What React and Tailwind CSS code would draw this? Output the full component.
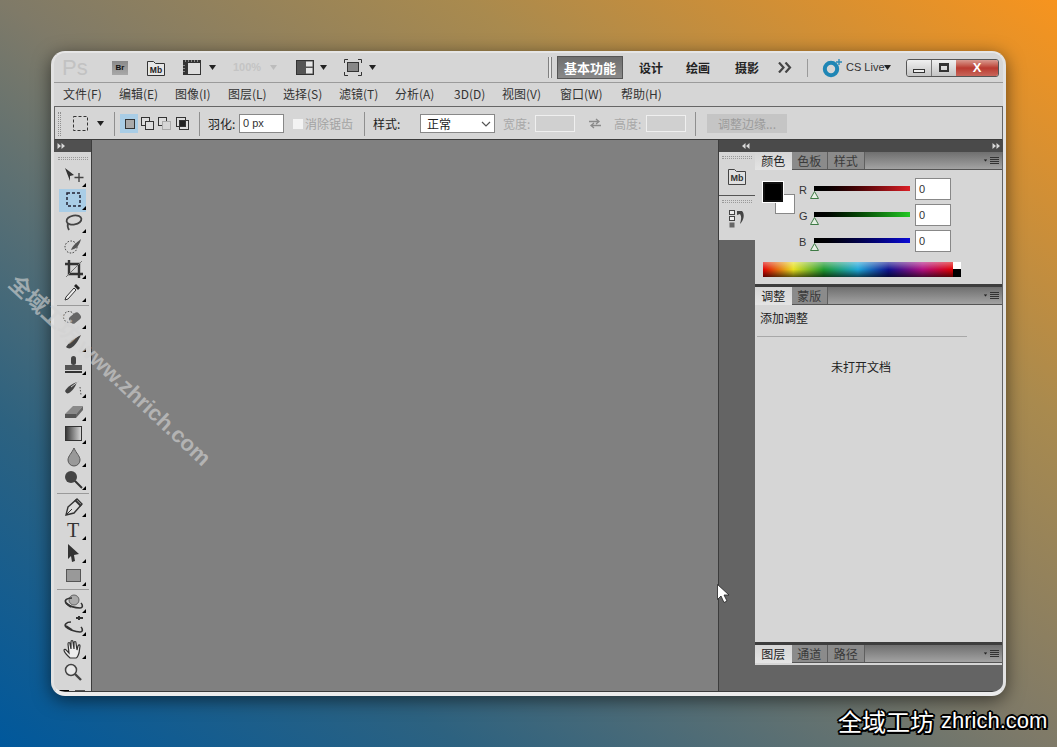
const cjk = { fontFamily: '"Noto Sans CJK SC","Liberation Sans",sans-serif' };

function Caret({ className = "" }) {
  return (
    <svg width="7" height="5" viewBox="0 0 7 5" className={"shrink-0 " + className}>
      <path d="M0 0h7L3.5 5z" fill="currentColor" />
    </svg>
  );
}

function Grid({ v = false }) {
  return v ? (
    <div className="h-[24px] w-[3px] shrink-0 border-x border-dotted border-[#8f8f8f]" />
  ) : (
    <div className="h-[3px] w-[30px] shrink-0 border-y border-dotted border-[#999]" />
  );
}

function DoubleArrow({ left = false, className = "" }) {
  return (
    <svg width="8" height="6" viewBox="0 0 8 6" className={"shrink-0 " + className}>
      {left ? (
        <path d="M3.5 0v6L0 3zM7.5 0v6L4 3z" fill="#d8d8d8" />
      ) : (
        <path d="M0.5 0v6L4 3zM4.5 0v6L8 3z" fill="#d8d8d8" />
      )}
    </svg>
  );
}

const tools1 = [
  <g key="m"><path d="M3 2l9 7-4 1v5z" fill="#333" /><path d="M17 7v9M12.5 11.5h9" stroke="#444" strokeWidth="1.4" /></g>,
  <rect key="r" x="5" y="4" width="13" height="13" fill="none" stroke="#223" strokeWidth="1.5" strokeDasharray="3 2" />,
  <g key="l" fill="none" stroke="#444" strokeWidth="1.8"><ellipse cx="12" cy="8" rx="7.5" ry="4.5" transform="rotate(-10 12 8)" /><path d="M6 12c-1 2 0 4 1 6" /></g>,
  <g key="q"><circle cx="9" cy="12" r="6" fill="none" stroke="#333" strokeDasharray="1.5 1.5" /><path d="M9 15c2-5 5-7 10-11-1 5-4 9-7 10z" fill="#555" /></g>,
  <g key="c" fill="none" stroke="#333" strokeWidth="2.4"><path d="M7 2v14h14" /><path d="M3 6h14v14" /><path d="M4 19L20 3" strokeWidth="1" stroke="#777" /></g>,
  <g key="e"><path d="M14 3l4 4-2 2-4-4z" fill="#222" /><path d="M12 7l2 2-8 9-3 1 1-3z" fill="#eee" stroke="#333" /></g>,
];
const tools2 = [
  <g key="h"><circle cx="7" cy="9" r="5.5" fill="none" stroke="#333" strokeDasharray="1.5 1.5" /><rect x="7" y="6" width="12" height="8" rx="3" transform="rotate(-40 13 10)" fill="#666" /></g>,
  <g key="b"><path d="M4 16c3-5 8-9 15-12-3 6-6 11-10 13-2 1-4 0-5-1z" fill="#444" /><path d="M11 8l5-3" stroke="#ccc" /></g>,
  <g key="s"><rect x="9" y="2" width="5" height="9" rx="2.5" fill="#444" /><rect x="3" y="11" width="17" height="5" fill="#555" /><rect x="3" y="17" width="17" height="2" fill="#333" /></g>,
  <g key="h2"><path d="M3 14c3-5 7-7 12-9-2 6-5 9-8 11-2 1-3 0-4-2z" fill="#444" /><path d="M9 10l8-6" stroke="#ccc" /><path d="M18 10l1 8" stroke="#555" strokeDasharray="1.5 1.5" /></g>,
  <g key="er"><path d="M3 14l8-8h10l-7 8z" fill="#8a8a8a" /><path d="M3 14h11v4H3z" fill="#555" /><path d="M14 14l7-8v4l-7 8z" fill="#666" /></g>,
  <g key="g"><defs><linearGradient id="gg"><stop offset="0" stopColor="#333" /><stop offset="1" stopColor="#ddd" /></linearGradient></defs><rect x="3.5" y="3.5" width="16" height="14" fill="url(#gg)" stroke="#333" /></g>,
  <path key="d" d="M12 2c2 5 6 8 6 12a6 6 0 0 1-12 0c0-4 4-7 6-12z" fill="#999" stroke="#555" />,
  <g key="do"><circle cx="9" cy="8" r="6" fill="#444" /><path d="M13 12l7 7" stroke="#333" strokeWidth="2" /></g>,
];
const tools3 = [
  <g key="p"><path d="M6 11l9-8 5 5-8 9-8 2z" fill="#ddd" stroke="#333" strokeWidth="1.4" /><path d="M13 4l6 6" stroke="#333" strokeWidth="2" /><path d="M4 19l6-6" stroke="#333" /></g>,
  <text key="t" x="11" y="18" textAnchor="middle" fontFamily="Liberation Serif" fontSize="20" fill="#333">T</text>,
  <path key="a" d="M6 2l11 10-5 1 1 6-3 1-1-6-3 3z" fill="#333" />,
  <rect key="rr" x="4.5" y="4.5" width="14" height="12" fill="#999" stroke="#555" />,
];
const tools4 = [
  <g key="o"><circle cx="12" cy="8" r="5" fill="#aaa" stroke="#666" /><path d="M10 6c-5 0-8 2-6 5s9 5 14 5c3 0 3-3 1-5" fill="none" stroke="#333" strokeWidth="1.6" /><path d="M4 11l5 4" stroke="#333" strokeWidth="2" /></g>,
  <g key="o2"><path d="M9 7c-5 0-7 3-5 5s9 5 14 5c3 0 3-3 1-5" fill="none" stroke="#333" strokeWidth="1.6" /><path d="M4 11l6 4" stroke="#333" strokeWidth="2" /><path d="M14 3h7M17 1v4" stroke="#333" strokeWidth="2" /></g>,
  <path key="ha" d="M6 18c-2-2-4-5-4-6s2-1 3 1l2 2-1-9c0-2 2-2 2 0l1 5V4c0-2 2-2 2 0l1 7V5c0-2 2-2 2 0l1 7 1-4c1-2 2-1 2 0l-1 7c-1 3-2 5-3 5H8z" fill="#eee" stroke="#333" strokeWidth="1.2" />,
  <g key="z"><circle cx="9" cy="9" r="5.5" fill="#e8e8e8" stroke="#444" strokeWidth="1.5" /><path d="M13 13l6 6" stroke="#444" strokeWidth="2.4" /></g>,
];

function Tool({ children, active = false, noCaret = false }) {
  return (
    <div className={"relative flex h-[23px] w-[27px] shrink-0 items-center justify-center " + (active ? "bg-[#a9cde6]" : "")}>
      <svg width="22" height="21" viewBox="0 0 22 21" className="mb-[2px]">{children}</svg>
      {!noCaret && <span className="absolute bottom-[2px] right-0 h-0 w-0 border-b-[4px] border-l-[4px] border-b-black border-l-transparent" />}
    </div>
  );
}

function Sep() {
  return <div className="mb-[2px] mt-[1px] h-px w-[32px] shrink-0 bg-[#9a9a9a]" />;
}

function Toolbar() {
  return (
    <div className="flex h-full w-[38px] shrink-0 flex-col border-r border-[#3c3c3c]">
      <div className="flex h-[12px] shrink-0 items-center bg-[#505050] pl-[3px]"><DoubleArrow /></div>
      <div className="flex min-h-0 flex-1 flex-col items-center overflow-hidden bg-[#d6d6d6]">
        <div className="mb-[6px] mt-[5px]"><Grid /></div>
        {tools1.map((t, i) => <Tool key={i} active={i === 1}>{t}</Tool>)}
        <Sep />
        {tools2.map((t, i) => <Tool key={i}>{t}</Tool>)}
        <Sep />
        {tools3.map((t, i) => <Tool key={i}>{t}</Tool>)}
        <Sep />
        {tools4.map((t, i) => <Tool key={i} noCaret={i === 3}>{t}</Tool>)}
        <div className="relative mt-[6px] flex w-full gap-[6px] pl-[5px]">
          <div className="h-[10px] w-[10px] bg-black" />
          <div className="h-[10px] w-[10px] bg-[#555]" />
        </div>
      </div>
    </div>
  );
}

function Tabs({ items }) {
  return (
    <div className="flex h-[18px] shrink-0 items-stretch border-b border-[#555] bg-gradient-to-b from-[#6f6f6f] to-[#a3a3a3]">
      {items.map((t, i) => (
        <div
          key={t}
          className={
            "flex w-[36.5px] items-center justify-center text-[12px] leading-none " +
            (i === 0 ? "-mb-px bg-gradient-to-b from-[#d6d6d6] to-[#e4e4e4] text-[#222]" : "border-r border-[#5f5f5f] bg-[#8b8b8b] text-[#3a3a3a]")
          }
          style={cjk}
        >
          {t}
        </div>
      ))}
      <div className="ml-auto mr-[3px] flex items-center gap-[1px]">
        <Caret className="scale-50 text-[#222]" />
        <div className="flex w-[9px] flex-col gap-[1px]">
          <span className="h-px bg-[#333]" /><span className="h-px bg-[#333]" /><span className="h-px bg-[#333]" /><span className="h-px bg-[#333]" />
        </div>
      </div>
    </div>
  );
}

function Slider({ label, cls }) {
  return (
    <div className="flex h-[26px] items-start">
      <span className="mt-[5px] w-[15px] text-[11px] leading-[14px] text-[#333]" style={{ fontFamily: "Liberation Sans" }}>{label}</span>
      <div className="relative mt-[8px] h-[5px] w-[96px]">
        <div className={"h-full w-full " + cls} />
        <svg width="9" height="8" viewBox="0 0 9 8" className="absolute left-[-4px] top-[5px]">
          <path d="M4.5 0.5L8.5 7.5H0.5z" fill="#e6f0e4" stroke="#3e7a45" />
        </svg>
      </div>
      <div className="ml-[5px] flex h-[22px] w-[36px] items-center border border-[#888] bg-white pl-[3px] text-[11px] text-[#333]" style={{ fontFamily: "Liberation Sans" }}>0</div>
    </div>
  );
}

function ColorPanel() {
  return (
    <div className="flex h-[132px] shrink-0 flex-col">
      <Tabs items={["颜色", "色板", "样式"]} />
      <div className="flex min-h-0 flex-1 flex-col bg-[#d6d6d6] pl-[8px]">
        <div className="flex pt-[8px]">
          <div className="relative mt-[4px] h-[32px] w-[36px] shrink-0">
            <div className="absolute left-[12px] top-[12px] h-[20px] w-[20px] border border-[#888] bg-white" />
            <div className="absolute left-0 top-0 h-[20px] w-[20px] border-2 border-[#111] bg-black outline outline-1 outline-white" />
          </div>
          <div className="flex flex-col">
            <Slider label="R" cls="bg-gradient-to-r from-black to-[#dc1f26]" />
            <Slider label="G" cls="bg-gradient-to-r from-black to-[#22c823]" />
            <Slider label="B" cls="bg-gradient-to-r from-black to-[#0b0bd6]" />
          </div>
        </div>
        <div className="mt-[6px] flex h-[15px] w-[198px]">
          <div className="relative h-full w-[190px] bg-[linear-gradient(to_right,#e00000,#e8e020_16%,#1f9a30_32%,#1ea6d8_50%,#101490_66%,#b01080_84%,#e00000)]">
            <div className="absolute inset-0 bg-gradient-to-b from-[#ffffff66] via-transparent to-[#00000099]" />
          </div>
          <div className="flex w-[8px] flex-col">
            <div className="h-[7px] bg-white" /><div className="flex-1 bg-black" />
          </div>
        </div>
      </div>
    </div>
  );
}

function AdjustPanel() {
  return (
    <div className="flex min-h-0 flex-1 flex-col">
      <Tabs items={["调整", "蒙版"]} />
      <div className="flex min-h-0 flex-1 flex-col bg-[#d6d6d6] text-[12px] text-[#222]" style={cjk}>
        <div className="pl-[5px] pt-[4px] leading-[18px]">添加调整</div>
        <div className="ml-[2px] mt-[9px] h-px w-[210px] bg-[#a8a8a8]" />
        <div className="mt-[21px] w-[210px] pl-[2px] text-center leading-[18px]">未打开文档</div>
      </div>
    </div>
  );
}

function RightDock() {
  return (
    <div className="flex h-full min-h-0 flex-1 flex-col">
      <div className="flex h-[12px] shrink-0 items-center justify-between bg-[#4a4a4a] pl-[23px] pr-[3px]">
        <DoubleArrow left /><DoubleArrow />
      </div>
      <div className="flex min-h-0 flex-1">
        <div className="flex w-[36px] shrink-0 flex-col bg-[#646464]">
          <div className="flex h-[44px] flex-col items-center border-b border-[#555] bg-[#d6d6d6] pt-[4px]">
            <Grid />
            <svg width="20" height="18" viewBox="0 0 20 18" className="mt-[8px]">
              <path d="M1.5 2.5h6l2 2h9v13h-17z" fill="#e0e0e0" stroke="#444" />
              <text x="10" y="14" textAnchor="middle" fontFamily="Liberation Sans" fontSize="9" fontWeight="700" fill="#333">Mb</text>
            </svg>
          </div>
          <div className="flex h-[44px] flex-col items-center bg-[#d6d6d6] pt-[4px]">
            <Grid />
            <svg width="18" height="20" viewBox="0 0 18 20" className="mt-[6px]">
              <rect x="1.5" y="1.5" width="5" height="4" fill="#eee" stroke="#444" />
              <rect x="1.5" y="7.5" width="5" height="4" fill="#eee" stroke="#444" />
              <rect x="1.5" y="13.5" width="5" height="5" fill="#666" />
              <path d="M9 2h5c3 3 2 9-2 13 1-4 2-7 0-10l-3 1z" fill="#444" />
            </svg>
          </div>
        </div>
        <div className="flex w-[247px] shrink-0 flex-col bg-[#646464]">
          <ColorPanel />
          <div className="h-[3px] shrink-0 bg-[#3d3d3d]" />
          <AdjustPanel />
          <div className="h-[3px] shrink-0 bg-[#3d3d3d]" />
          <div className="h-[20px] shrink-0 bg-[#d6d6d6]"><Tabs items={["图层", "通道", "路径"]} /></div>
          <div className="h-[26px] shrink-0" />
        </div>
        <div className="flex-1 bg-[#646464]" />
      </div>
    </div>
  );
}

function TitleBar() {
  return (
    <div className="flex h-[30px] shrink-0 items-center whitespace-nowrap border-b border-[#9b9b9b] bg-[#d6d6d6]">
      <span className="ml-[8px] w-[26px] text-[22px] leading-none text-[#c2c2c2]" style={{ fontFamily: "Liberation Sans" }}>Ps</span>
      <div className="ml-[24px] flex h-[14px] w-[16px] items-center justify-center bg-gradient-to-b from-[#8a8a8a] to-[#a8a8a8] text-[8px] font-bold text-[#111]" style={{ fontFamily: "Liberation Sans" }}>Br</div>
      <svg width="18" height="16" viewBox="0 0 18 16" className="ml-[19px] shrink-0">
        <path d="M0.5 1.5h6l2 2h9v12h-17z" fill="#e6e6e6" stroke="#333" />
        <text x="9" y="13" textAnchor="middle" fontFamily="Liberation Sans" fontSize="8.5" fontWeight="700" fill="#222">Mb</text>
      </svg>
      <svg width="18" height="15" viewBox="0 0 18 15" className="ml-[18px] shrink-0">
        <rect x="0.5" y="0.5" width="17" height="14" fill="#ddd" stroke="#333" />
        <path d="M0 0h18v3H0zM0 3h5v12H0z" fill="#333" />
        <path d="M2 1h1M5 1h1M8 1h1M11 1h1M14 1h1M1 5v1M1 8v1M1 11v1" stroke="#ddd" />
      </svg>
      <Caret className="ml-[8px] text-[#222]" />
      <span className="ml-[17px] w-[29px] text-[11px] font-bold leading-none text-[#c4c4c4]" style={{ fontFamily: "Liberation Sans" }}>100%</span>
      <Caret className="ml-[8px] text-[#bcbcbc]" />
      <svg width="18" height="15" viewBox="0 0 18 15" className="ml-[19px] shrink-0">
        <rect x="0.5" y="0.5" width="17" height="14" fill="#555" stroke="#333" />
        <path d="M10 1.5h6.5v5H10zM10 8h6.5v5.5H10z" fill="#e6e6e6" />
      </svg>
      <Caret className="ml-[6px] text-[#222]" />
      <svg width="18" height="17" viewBox="0 0 18 17" className="ml-[17px] shrink-0">
        <rect x="3.5" y="3.5" width="11" height="9" fill="#888" stroke="#333" />
        <path d="M0.5 4V0.5H4M14 0.5h3.5V4M17.5 13v3.5H14M4 16.5H0.5V13" fill="none" stroke="#333" />
      </svg>
      <Caret className="ml-[7px] text-[#222]" />

      <div className="ml-[172px] h-[21px] w-[4px] border-x border-[#808080] bg-[#e6e6e6]" />
      <div className="ml-[5px] flex h-[23px] w-[66px] items-center justify-center border border-[#555] bg-gradient-to-b from-[#6e6e6e] to-[#8a8a8a] text-[13px] font-bold text-white" style={cjk}>基本功能</div>
      <span className="ml-[16px] w-[24px] text-[12px] font-bold text-[#222]" style={cjk}>设计</span>
      <span className="ml-[23px] w-[25px] text-[12px] font-bold text-[#222]" style={cjk}>绘画</span>
      <span className="ml-[24px] w-[24px] text-[12px] font-bold text-[#222]" style={cjk}>摄影</span>
      <svg width="14" height="11" viewBox="0 0 14 11" className="ml-[19px] shrink-0">
        <path d="M1 0.5l4.5 5-4.5 5M7.5 0.5l4.5 5-4.5 5" fill="none" stroke="#444" strokeWidth="2.2" />
      </svg>
      <div className="ml-[15px] h-[18px] w-px bg-[#9a9a9a]" />
      <svg width="20" height="20" viewBox="0 0 20 20" className="ml-[14px] shrink-0">
        <circle cx="9" cy="11" r="6.2" fill="none" stroke="#1f86b5" strokeWidth="4" />
        <path d="M17 1v6M14 4h6" stroke="#2a8ab8" strokeWidth="1.4" />
      </svg>
      <span className="ml-[4px] w-[37px] text-[11px] leading-none text-[#333]" style={{ fontFamily: "Liberation Sans" }}>CS Live</span>
      <Caret className="ml-[1px] text-[#222]" />
      <div className="ml-[15px] flex h-[18px] w-[93px] shrink-0 overflow-hidden rounded-[3px] border border-[#555]">
        <div className="flex w-[25px] items-end justify-center border-r border-[#777] bg-gradient-to-b from-[#f0f0f0] to-[#c4c4c4] pb-[3px]">
          <div className="h-[4px] w-[12px] border border-[#333] bg-[#eee]" />
        </div>
        <div className="flex w-[24px] items-center justify-center bg-gradient-to-b from-[#f0f0f0] to-[#c4c4c4]">
          <div className="h-[9px] w-[10px] border-2 border-t-[3px] border-[#333]" />
        </div>
        <div className="flex flex-1 items-center justify-center bg-gradient-to-b from-[#d89a90] via-[#b93a30] to-[#c8655a] text-[13px] font-bold leading-none text-white" style={{ fontFamily: "Liberation Sans" }}>X</div>
      </div>
    </div>
  );
}

function MenuBar() {
  const items = [
    ["文件(F)", "w-[56px]"], ["编辑(E)", "w-[56px]"], ["图像(I)", "w-[53px]"], ["图层(L)", "w-[55px]"],
    ["选择(S)", "w-[56px]"], ["滤镜(T)", "w-[56px]"], ["分析(A)", "w-[59px]"], ["3D(D)", "w-[48px]"],
    ["视图(V)", "w-[58px]"], ["窗口(W)", "w-[61px]"], ["帮助(H)", "w-[50px]"],
  ];
  return (
    <div className="flex h-[23px] shrink-0 items-center bg-[#d6d6d6] pb-[2px] pl-[9px] text-[12px] text-[#333]" style={cjk}>
      {items.map(([m, w]) => <span key={m} className={"whitespace-nowrap leading-none " + w}>{m}</span>)}
    </div>
  );
}

function VSep({ ml }) {
  return <div className={"h-[24px] w-px shrink-0 bg-[#8f8f8f] " + ml} />;
}

function ModeIcon({ kind }) {
  return (
    <svg width="13" height="13" viewBox="0 0 13 13" className="shrink-0">
      {kind === 0 && <rect x="2.5" y="2.5" width="9" height="9" fill="#aaa" stroke="#333" />}
      {kind === 1 && <g fill="#ddd" stroke="#333"><rect x="0.5" y="0.5" width="8" height="8" /><rect x="4.5" y="4.5" width="8" height="8" /></g>}
      {kind === 2 && <g fill="none" stroke="#333"><rect x="0.5" y="0.5" width="8" height="8" fill="#ddd" /><rect x="4.5" y="4.5" width="8" height="8" stroke="#aaa" fill="#d6d6d6" /></g>}
      {kind === 3 && <g stroke="#333"><rect x="0.5" y="0.5" width="9" height="9" fill="#ddd" /><rect x="3.5" y="3.5" width="9" height="9" fill="#ddd" /><rect x="3.5" y="3.5" width="6" height="6" fill="#222" /></g>}
    </svg>
  );
}

function OptionsBar() {
  return (
    <div className="flex h-[34px] shrink-0 items-center border border-[#666] border-b-[#3c3c3c] bg-[#d6d6d6] pt-px text-[12px] text-[#222]" style={cjk}>
      <div className="ml-[3px]"><Grid v /></div>
      <svg width="15" height="15" viewBox="0 0 15 15" className="ml-[12px] shrink-0">
        <rect x="0.5" y="0.5" width="14" height="14" fill="none" stroke="#333" strokeDasharray="3 2" />
      </svg>
      <Caret className="ml-[9px] text-[#222]" />
      <VSep ml="ml-[10px]" />
      <div className="ml-[5px] flex h-[19px] w-[18px] items-center justify-center bg-[#a9cde6]"><ModeIcon kind={0} /></div>
      <div className="ml-[3px]"><ModeIcon kind={1} /></div>
      <div className="ml-[4px]"><ModeIcon kind={2} /></div>
      <div className="ml-[5px]"><ModeIcon kind={3} /></div>
      <VSep ml="ml-[10px]" />
      <span className="ml-[8px] w-[30px] whitespace-nowrap">羽化:</span>
      <div className="ml-px flex h-[19px] w-[45px] items-center border border-[#888] bg-white pl-[3px] text-[11px] text-[#333]" style={{ fontFamily: "Liberation Sans" }}>0 px</div>
      <div className="ml-[9px] h-[10px] w-[10px] bg-[#f3f3f3]" />
      <span className="ml-[2px] w-[48px] whitespace-nowrap text-[#a3a3a3]">消除锯齿</span>
      <VSep ml="ml-[11px]" />
      <span className="ml-[8px] w-[30px] whitespace-nowrap">样式:</span>
      <div className="ml-[17px] flex h-[19px] w-[75px] items-center justify-between border border-[#888] bg-white pl-[6px] pr-[3px]">
        <span>正常</span>
        <svg width="10" height="6" viewBox="0 0 10 6"><path d="M1 1l4 4 4-4" fill="none" stroke="#555" strokeWidth="1.2" /></svg>
      </div>
      <span className="ml-[8px] w-[32px] whitespace-nowrap text-[#a8a8a8]">宽度:</span>
      <div className="h-[17px] w-[40px] border border-[#efefef] bg-[#d0d0d0]" />
      <svg width="14" height="11" viewBox="0 0 14 11" className="ml-[13px] shrink-0">
        <path d="M1 3.5h9M8 1l3 2.5L8 6M13 7.5H4M6 5L3 7.5 6 10" fill="none" stroke="#8a8a8a" strokeWidth="1.3" />
      </svg>
      <span className="ml-[12px] w-[32px] whitespace-nowrap text-[#a8a8a8]">高度:</span>
      <div className="h-[17px] w-[40px] border border-[#efefef] bg-[#d0d0d0]" />
      <VSep ml="ml-[9px]" />
      <div className="ml-[11px] flex h-[19px] w-[80px] items-center justify-center bg-[#c5c5c5] text-[#9c9c9c]">调整边缘...</div>
    </div>
  );
}

export default function App() {
  return (
    <div className="relative h-[747px] w-[1057px] overflow-hidden bg-[linear-gradient(to_top_right,#00589c_0%,#2d6280_22%,#7f7a68_50%,#a98a4e_72%,#f7941e_100%)] pl-[51px] pt-[51px]">
      <div className="flex h-[645px] w-[955px] flex-col overflow-hidden rounded-[14px] border-x-[3px] border-b-[4px] border-t-[2px] border-x-[#e2e2e2] border-b-[#ececec] border-t-[#e6e6e6] bg-[#d6d6d6] shadow-[0_4px_18px_rgba(0,0,0,0.55)]">
        <TitleBar />
        <MenuBar />
        <OptionsBar />
        <div className="flex min-h-0 flex-1 border-b border-[#3c3c3c]">
          <Toolbar />
          <div className="h-full w-[627px] shrink-0 border-r border-[#3c3c3c] bg-[#808080]" />
          <RightDock />
        </div>
      </div>

      <svg width="13" height="20" viewBox="0 0 13 20" className="absolute left-[717px] top-[584px]">
        <path d="M0.5 0.5v15l3.5-3.5 3 6.5 3-1.5-3-6h5z" fill="#fff" stroke="#222" strokeWidth="0.8" />
      </svg>

      <div
        className="absolute left-[12px] top-[269px] origin-left rotate-[43deg] whitespace-nowrap text-[22px] font-bold leading-none text-[#d2d2d2a0]"
        style={{ fontFamily: '"Liberation Sans","Noto Sans CJK SC",sans-serif' }}
      >
        全域工坊 www.zhrich.com
      </div>

      <div className="absolute left-[838px] top-[709px] flex items-center gap-[7px] whitespace-nowrap leading-none text-white [text-shadow:-1.5px_-1.5px_0_#000,1.5px_-1.5px_0_#000,-1.5px_1.5px_0_#000,1.5px_1.5px_0_#000,0_2px_0_#000,2px_0_0_#000,-2px_0_0_#000,0_-2px_0_#000]">
        <span className="text-[24px]" style={cjk}>全域工坊</span>
        <span className="text-[22px]" style={{ fontFamily: "Liberation Sans" }}>zhrich.com</span>
      </div>
    </div>
  );
}
